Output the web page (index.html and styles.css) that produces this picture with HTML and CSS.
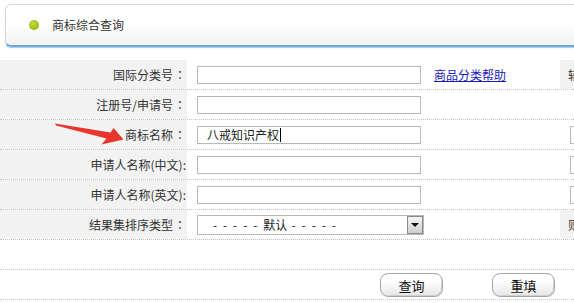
FILE: index.html
```html
<!DOCTYPE html>
<html lang="zh-CN">
<head>
<meta charset="utf-8">
<title>商标综合查询</title>
<link rel="stylesheet" href="styles.css">
</head>
<body>
<div class="page">
  <div class="titlebar">
    <span class="dot"></span>
    <span class="title">商标综合查询</span>
  </div>

  <div class="form">
    <div class="row">
      <div class="label">国际分类号<span class="colon">：</span></div>
      <div class="field"><input class="text" type="text"></div>
      <div class="extra"><a href="#" class="help">商品分类帮助</a></div>
      <div class="label2">辅助查询</div>
    </div>
    <div class="row">
      <div class="label">注册号/申请号<span class="colon">：</span></div>
      <div class="field"><input class="text" type="text"></div>
      <div class="extra"></div>
      <div class="blank2"></div>
    </div>
    <div class="row">
      <div class="label">商标名称<span class="colon">：</span></div>
      <div class="field"><div class="text filled">八戒知识产权<span class="caret"></span></div></div>
      <div class="extra"></div>
      <div class="blank2"><input class="text" type="text"></div>
    </div>
    <div class="row">
      <div class="label">申请人名称(中文):</div>
      <div class="field"><input class="text" type="text"></div>
      <div class="extra"></div>
      <div class="blank2"><input class="text" type="text"></div>
    </div>
    <div class="row">
      <div class="label">申请人名称(英文):</div>
      <div class="field"><input class="text" type="text"></div>
      <div class="extra"></div>
      <div class="blank2"><input class="text" type="text"></div>
    </div>
    <div class="row">
      <div class="label">结果集排序类型<span class="colon">：</span></div>
      <div class="field">
        <div class="select">
          <span class="select-text"><span class="dashes">- - - - - </span>默认<span class="dashes"> - - - - -</span></span>
          <span class="select-btn"><span class="tri"></span></span>
        </div>
      </div>
      <div class="extra"></div>
      <div class="label2">则</div>
    </div>
    <div class="row empty"></div>
    <div class="row actions">
      <button class="btn" type="button">查询</button>
      <button class="btn" type="button">重填</button>
    </div>
  </div>

  <svg class="arrow" width="80" height="30" viewBox="50 120 80 30">
    <polygon points="55,123.5 110.5,132.5 113.5,128 123.5,139.5 101.5,144.5 106.5,138.5 56,125.5" fill="#e8362e"/>
  </svg>
</div>
</body>
</html>
```

FILE: styles.css
```css
html, body {
  margin: 0;
  padding: 0;
  background: #fff;
  overflow: hidden;
}

body {
  font-family: "Noto Sans CJK SC", "Noto Sans", sans-serif;
  font-size: 12px;
  color: #333;
}

.page {
  position: relative;
  width: 800px;
  height: 303px;
  padding-top: 4px;
  box-sizing: border-box;
}

.titlebar {
  margin-left: 5px;
  width: 760px;
  height: 43px;
  box-sizing: border-box;
  border: 1px solid #d8d8d8;
  border-bottom: 2px solid #6aa9d8;
  border-radius: 6px;
  background: linear-gradient(#ffffff 45%, #f2f2f2);
  box-shadow: 0 1px 1px rgba(80, 150, 210, 0.5);
  display: flex;
  align-items: center;
  padding-left: 23px;
}

.dot {
  width: 10px;
  height: 10px;
  border-radius: 50%;
  background: radial-gradient(circle at 40% 35%, #c4de3a, #94b814 70%, #7f9e0c);
  margin-right: 13px;
}

.title {
  font-size: 12px;
  color: #333;
  line-height: 1;
}

.form {
  margin-top: 13px;
}

.row {
  display: grid;
  grid-template-columns: 187px 237px 136px 1fr;
  height: 30px;
  box-sizing: border-box;
  border-bottom: 1px dotted #c4c4c4;
}

.row > div {
  display: flex;
  align-items: center;
}

.label {
  background: #f2f2f2;
  justify-content: flex-end;
  padding-right: 1px;
  color: #333;
  white-space: nowrap;
}

.colon {
  font-family: "Noto Sans CJK TC", "Noto Sans CJK SC", sans-serif;
  margin-left: 1px;
}

.field {
  padding-left: 10px;
}

.text {
  width: 224px;
  height: 18px;
  box-sizing: border-box;
  border: 1px solid #b8b8b8;
  background: #fff;
  margin: 0;
  padding: 0 0 0 9px;
  font-family: inherit;
  font-size: 12px;
  color: #222;
  outline: none;
}

.filled {
  display: flex;
  align-items: center;
  line-height: 1;
}

.caret {
  width: 1px;
  height: 14px;
  background: #000;
  margin-left: 1px;
}

.extra {
  padding-left: 10px;
}

.help {
  color: #1a1ab8;
  text-decoration: underline;
  font-size: 12px;
}

.label2 {
  background: #f2f2f2;
  padding-left: 8px;
  color: #333;
  white-space: nowrap;
}

.blank2 {
  padding-left: 10px;
}

.select {
  width: 230px;
  height: 20px;
  box-sizing: border-box;
  border: 1px solid #b8b8b8;
  display: flex;
  align-items: center;
  justify-content: space-between;
  background: #fff;
}

.select-text {
  padding-left: 15px;
  color: #222;
  font-size: 12px;
  white-space: pre;
}

.dashes {
  letter-spacing: 1.6px;
}

.select-btn {
  width: 16px;
  height: 18px;
  box-sizing: border-box;
  border: 1px solid #8a8a8a;
  background: linear-gradient(#f4f4f4, #cfcfcf);
  display: flex;
  align-items: center;
  justify-content: center;
}

.tri {
  width: 0;
  height: 0;
  border-left: 4px solid transparent;
  border-right: 4px solid transparent;
  border-top: 4px solid #111;
}

.empty {
  display: block;
}

.actions {
  display: flex;
  align-items: center;
  padding-left: 380px;
  gap: 49px;
}

.btn {
  width: 63px;
  height: 24px;
  border: 1px solid #a8a8a8;
  border-radius: 8px;
  background: linear-gradient(#ffffff 30%, #e6e6e6);
  box-shadow: inset -1px -1px 0 #d0d0d0;
  font-family: inherit;
  font-size: 13px;
  color: #111;
  padding: 0;
  margin-top: 1px;
}

.arrow {
  position: absolute;
  left: 50px;
  top: 120px;
}
```
